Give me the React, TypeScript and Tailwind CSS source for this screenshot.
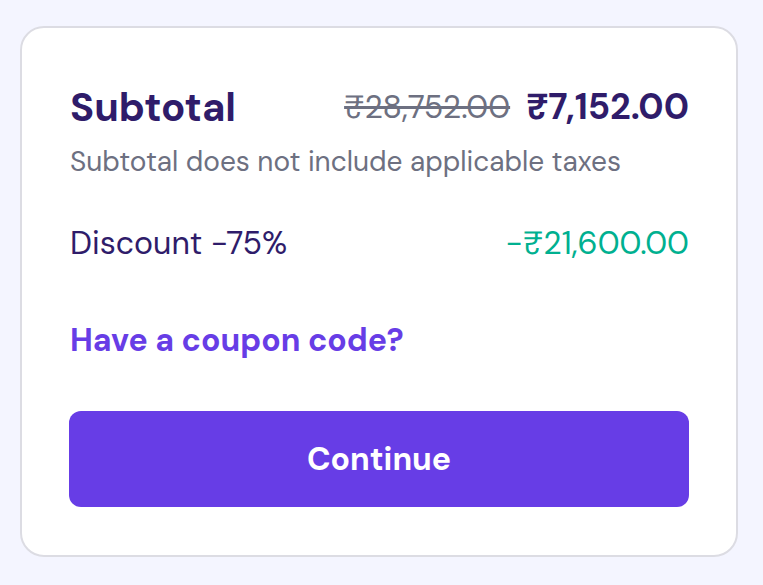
import React from "react";

const font = { fontFamily: '"DM Sans", Inter, "Noto Sans", sans-serif' };

const OrderSummary: React.FC = () => {
  return (
    <div className="min-h-[585px] w-full bg-[#f4f5ff] pt-[26px] pl-[20px]" style={font}>
      <div className="flex w-[718px] flex-col rounded-[24px] border-2 border-[#dcdce3] bg-white px-[47px] pt-[55px] pb-[48px]">
        {/* subtotal row */}
        <div className="flex h-12 items-center justify-between">
          <span className="pl-px text-[40px] font-bold text-[#2f1c6a]">Subtotal</span>
          <div className="flex items-center gap-4">
            <span className="text-[32px] text-[#6d7081] line-through">₹28,752.00</span>
            <span className="text-[36px] font-bold text-[#2f1c6a]">₹7,152.00</span>
          </div>
        </div>
        <p className="mt-[13px] h-9 pl-px text-[28px] leading-9 text-[#6d7081]">
          Subtotal does not include applicable taxes
        </p>

        {/* discount */}
        <div className="mt-[43px] flex h-10 items-center justify-between pl-px text-[32px]">
          <span className="text-[#2f1c6a]">Discount -75%</span>
          <span className="text-[#00b090]">-₹21,600.00</span>
        </div>

        <button className="mt-[57px] h-10 self-start pl-px text-[32px] font-bold leading-10 text-[#673de6]">
          Have a coupon code?
        </button>

        <button className="mt-[51px] h-[96px] w-full rounded-[12px] bg-[#673de6] text-[32px] font-bold text-white">
          Continue
        </button>
      </div>
    </div>
  );
};

export default function App() {
  return <OrderSummary />;
}
